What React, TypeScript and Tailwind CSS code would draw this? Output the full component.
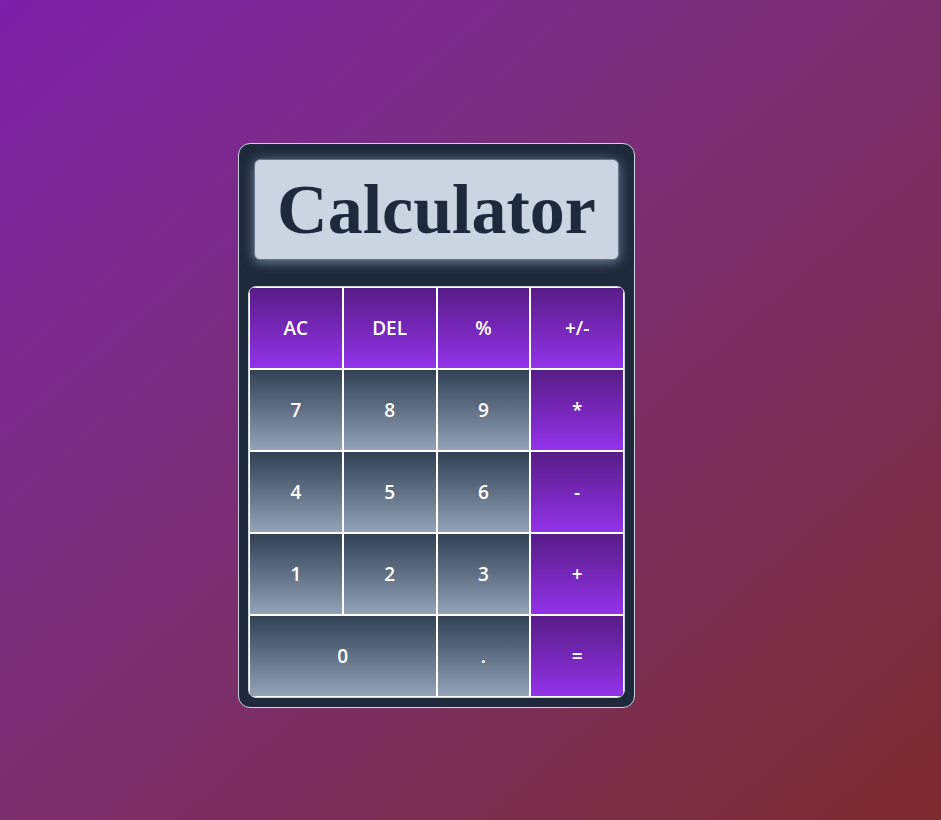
import React from "react";

type Btn = { label: string; kind: "op" | "num"; span?: number };

const buttons: Btn[] = [
  { label: "AC", kind: "op" },
  { label: "DEL", kind: "op" },
  { label: "%", kind: "op" },
  { label: "+/-", kind: "op" },
  { label: "7", kind: "num" },
  { label: "8", kind: "num" },
  { label: "9", kind: "num" },
  { label: "*", kind: "op" },
  { label: "4", kind: "num" },
  { label: "5", kind: "num" },
  { label: "6", kind: "num" },
  { label: "-", kind: "op" },
  { label: "1", kind: "num" },
  { label: "2", kind: "num" },
  { label: "3", kind: "num" },
  { label: "+", kind: "op" },
  { label: "0", kind: "num", span: 2 },
  { label: ".", kind: "num" },
  { label: "=", kind: "op" },
];

export default function App() {
  return (
    <div className="min-h-[820px] w-full bg-gradient-to-br from-[#7c20a8] to-[#7c2a2c] pl-[238px] pt-[143px]">
      <div className="w-[397px] rounded-[12px] border border-[#cbd5e1] bg-[#1e293b] p-[9px]">
        <div className="m-[6px] flex h-[101px] items-center justify-center rounded-[6px] border border-[#64748b] bg-[#cbd5e1] shadow-[0_2px_12px_rgba(148,163,184,0.75)]">
          <span
            className="text-[70px] font-bold leading-none text-[#1e293b]"
            style={{ fontFamily: '"Liberation Serif", serif' }}
          >
            Calculator
          </span>
        </div>
        <div className="mt-[26px] grid grid-cols-4 overflow-hidden rounded-[8px] border border-[#cbd5e1]">
          {buttons.map((b) => (
            <button
              key={b.label}
              className={
                "flex h-[82px] items-center justify-center border border-white text-[19px] font-semibold text-white " +
                (b.span === 2 ? "col-span-2 " : "") +
                (b.kind === "op"
                  ? "bg-gradient-to-b from-[#581c87] to-[#9333ea]"
                  : "bg-gradient-to-b from-[#334155] to-[#94a3b8]")
              }
              style={{ fontFamily: '"Open Sans", sans-serif' }}
            >
              {b.label}
            </button>
          ))}
        </div>
      </div>
    </div>
  );
}
